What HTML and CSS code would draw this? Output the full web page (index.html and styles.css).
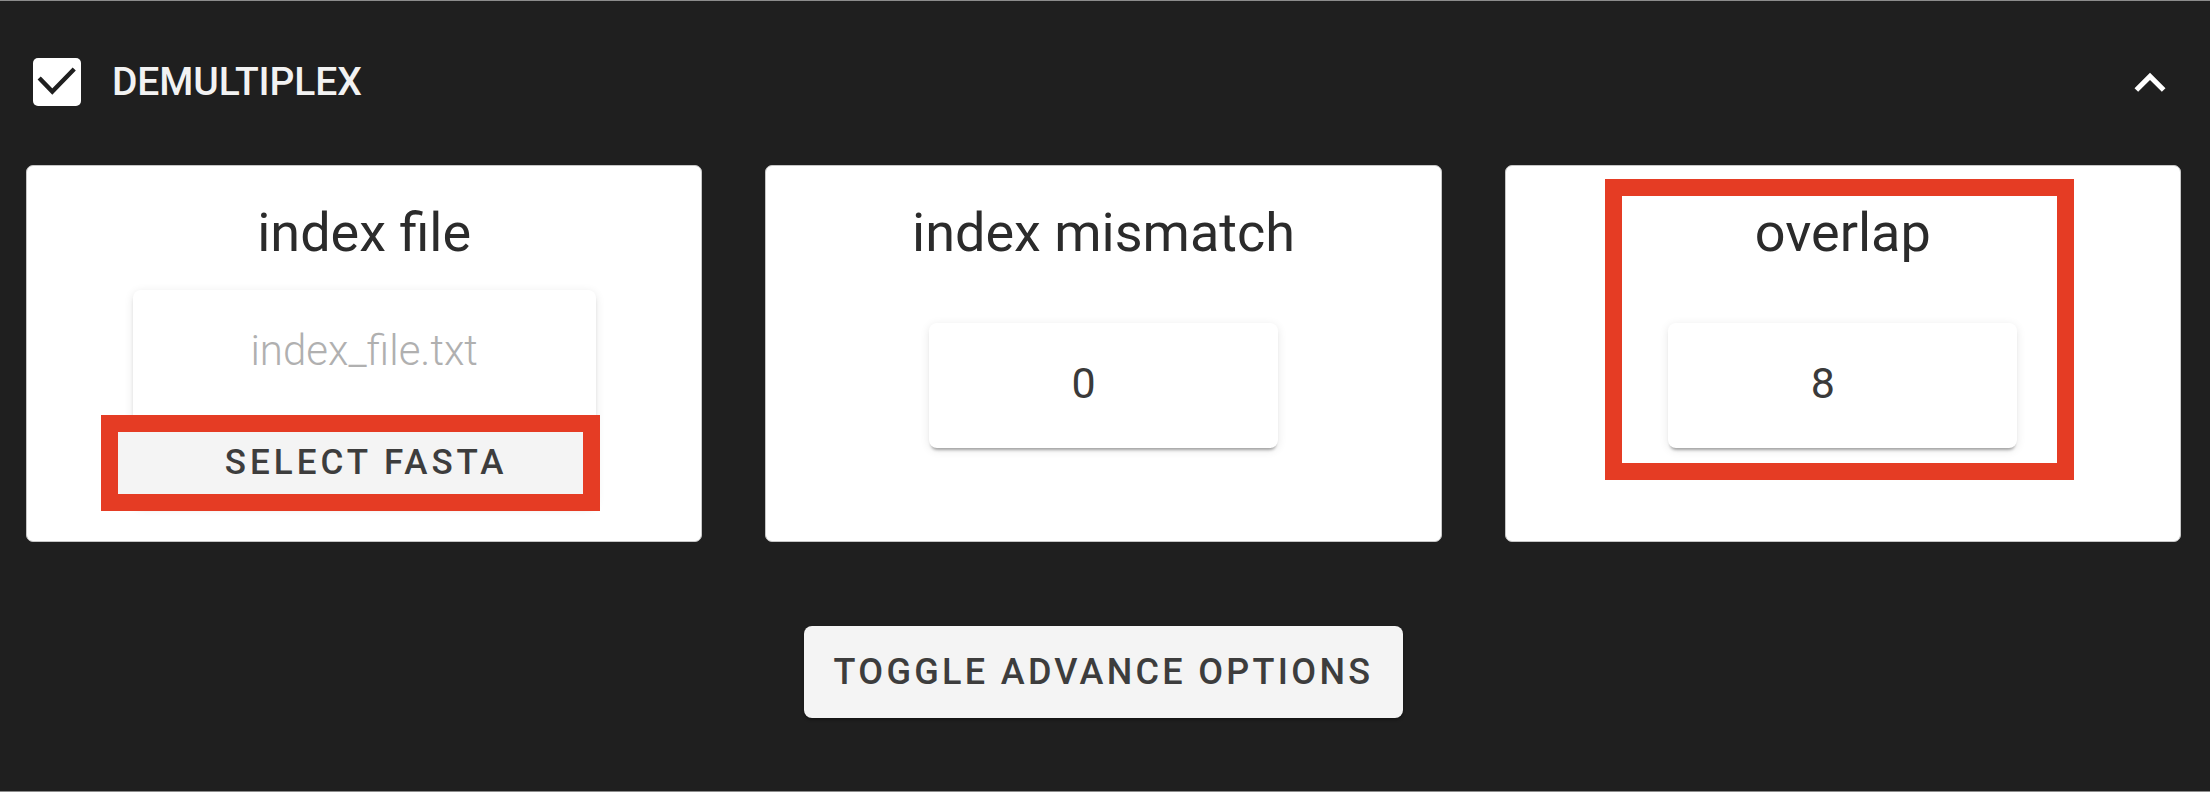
FILE: index.html
```html
<!DOCTYPE html>
<html lang="en">
<head>
<meta charset="utf-8">
<title>Demultiplex</title>
<link rel="stylesheet" href="styles.css">
</head>
<body>
<section class="panel">
  <header class="panel-head">
    <div class="head-left">
      <svg class="checkbox" width="48" height="48" viewBox="0 0 48 48" aria-hidden="true">
        <rect x="0" y="0" width="48" height="48" rx="5" fill="#ffffff"/>
        <polyline points="7.7,21.5 19.3,33.5 39.7,12.5" fill="none" stroke="#1f1f1f" stroke-width="4.4" stroke-linecap="square"/>
      </svg>
      <span class="head-title">DEMULTIPLEX</span>
    </div>
    <svg class="chevron" width="62" height="62" viewBox="0 0 24 24" aria-hidden="true">
      <path d="M12 8l-6 6 1.41 1.41L12 10.83l4.59 4.58L18 14z" fill="#ffffff"/>
    </svg>
  </header>

  <div class="cards">
    <div class="card">
      <h2 class="card-title">index file</h2>
      <div class="file-box">
        <div class="file-name">index_file.txt</div>
        <button class="select-btn">SELECT FASTA</button>
      </div>
      <div class="mark mark-file"></div>
    </div>

    <div class="card">
      <h2 class="card-title">index mismatch</h2>
      <div class="value-box"><span class="value">0</span></div>
    </div>

    <div class="card">
      <h2 class="card-title">overlap</h2>
      <div class="value-box"><span class="value">8</span></div>
      <div class="mark mark-overlap"></div>
    </div>
  </div>

  <div class="actions">
    <button class="toggle-btn">TOGGLE ADVANCE OPTIONS</button>
  </div>
</section>
</body>
</html>
```

FILE: styles.css
```css
* {
  box-sizing: border-box;
}

html, body {
  margin: 0;
  padding: 0;
  background: #1f1f1f;
}

body {
  width: 2210px;
  height: 792px;
  overflow: hidden;
  font-family: Roboto, "Liberation Sans", Arial, sans-serif;
}

.panel {
  height: 792px;
  border-top: 1px solid #8c8c8c;
  border-bottom: 1px solid #8c8c8c;
  padding: 0 29px 0 26px;
  background: #1f1f1f;
}

.panel-head {
  height: 162px;
  display: flex;
  align-items: center;
  justify-content: space-between;
  padding-left: 7px;
}

.head-left {
  display: flex;
  align-items: center;
  gap: 31px;
}

.checkbox {
  display: block;
}

.head-title {
  color: #f2f2f2;
  font-size: 39px;
  font-weight: 500;
  letter-spacing: -0.1px;
  line-height: 1;
  padding-top: 1px;
}

.chevron {
  display: block;
  margin-top: 1px;
}

.cards {
  margin-top: 2px;
  display: grid;
  grid-template-columns: repeat(3, 1fr);
  column-gap: 63px;
}

.card {
  position: relative;
  height: 377px;
  background: #ffffff;
  border: 1px solid #c6c6c6;
  border-radius: 7px;
  padding-top: 36px;
  display: flex;
  flex-direction: column;
  align-items: center;
}

.card-title {
  margin: 0;
  font-size: 54px;
  font-weight: 400;
  line-height: 62px;
  color: #2b2b2b;
}

.file-box {
  margin-top: 26px;
  width: 463px;
  height: 216px;
  background: #ffffff;
  border-radius: 8px;
  box-shadow: 0 4px 4px -2px rgba(0,0,0,0.22), 0 2px 10px rgba(0,0,0,0.10);
  padding-top: 37px;
  display: flex;
  flex-direction: column;
  align-items: center;
}

.file-name {
  font-size: 42px;
  font-weight: 300;
  line-height: 48px;
  color: #b0b0b0;
}

.select-btn {
  margin-top: 55px;
  margin-left: -15px;
  width: calc(100% + 15px);
  height: 64px;
  border: none;
  background: #f4f4f4;
  font-family: Roboto, "Liberation Sans", Arial, sans-serif;
  font-size: 35px;
  font-weight: 500;
  letter-spacing: 4px;
  color: #3d3d3d;
  padding: 0 0 0 19px;
}

.value-box {
  margin-top: 59px;
  width: 349px;
  height: 125px;
  background: #ffffff;
  border-radius: 8px;
  box-shadow: 0 4px 3px -2px rgba(0,0,0,0.32), 0 2px 10px rgba(0,0,0,0.10);
  display: flex;
  align-items: center;
  justify-content: center;
  padding-right: 40px;
  padding-bottom: 5px;
}

.value {
  font-size: 43px;
  font-weight: 400;
  color: #3a3a3a;
}

.mark {
  position: absolute;
  border: 17.5px solid #e53c24;
}

.mark-file {
  left: 74px;
  top: 249px;
  width: 499px;
  height: 96px;
}

.mark-overlap {
  left: 99px;
  top: 13px;
  width: 469px;
  height: 301px;
}

.actions {
  margin-top: 84px;
  display: flex;
  justify-content: center;
}

.toggle-btn {
  width: 599px;
  height: 92px;
  border: none;
  border-radius: 8px;
  background: #f4f4f4;
  box-shadow: 0 2px 3px rgba(0,0,0,0.35);
  font-family: Roboto, "Liberation Sans", Arial, sans-serif;
  font-size: 36px;
  font-weight: 500;
  letter-spacing: 3.3px;
  color: #3d3d3d;
  padding: 0;
}
```
